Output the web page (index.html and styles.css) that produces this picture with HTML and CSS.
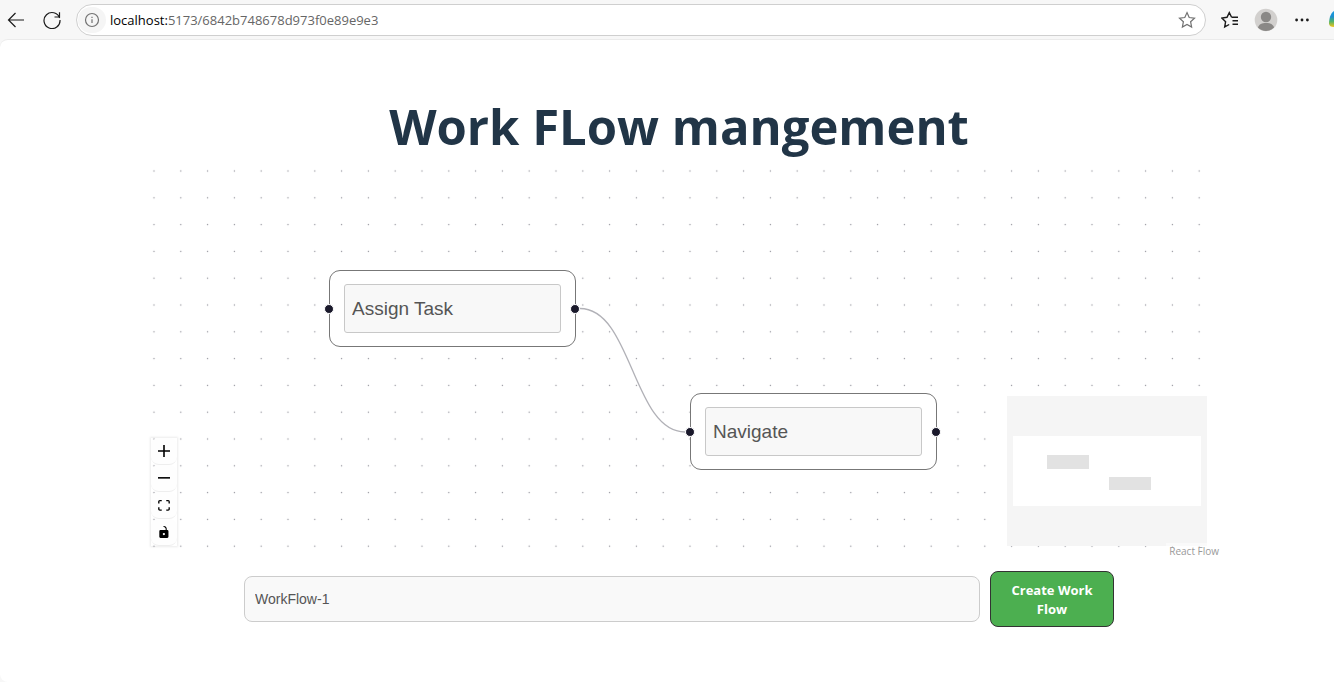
FILE: index.html
```html
<!DOCTYPE html>
<html lang="en">
<head>
<meta charset="utf-8">
<title>Work Flow</title>
<link rel="stylesheet" href="styles.css">
</head>
<body>
<header class="toolbar">
  <button class="tool" aria-label="Back">
    <svg width="18" height="18" viewBox="0 0 18 18"><path d="M17 9H1.5M8.5 2 1.5 9l7 7"/></svg>
  </button>
  <button class="tool" aria-label="Refresh">
    <svg width="18" height="18" viewBox="0 0 18 18"><path d="M16.6 7A8 8 0 1 0 17 9M16.5 1.2V6h-5"/></svg>
  </button>
  <div class="address">
    <button class="site-info" aria-label="Site information">
      <svg width="16" height="16" viewBox="0 0 16 16"><circle cx="8" cy="8" r="6.5"/><path d="M8 7.3v3.6M8 4.8v1.3"/></svg>
    </button>
    <p class="url"><span class="host">localhost:</span>5173/6842b748678d973f0e89e9e3</p>
    <button class="star" aria-label="Add to favorites">
      <svg width="18" height="18" viewBox="0 0 18 18"><path d="M9 1.6l2.2 4.9 5.3.6-3.9 3.6 1 5.3L9 13.4 4.4 16l1-5.3-3.9-3.6 5.3-.6z"/></svg>
    </button>
  </div>
  <button class="tool" aria-label="Favorites">
    <svg width="18" height="18" viewBox="0 0 18 18"><path d="M10.6 6.3 8.3 1.6 6 6.3l-5.1.8 3.7 3.6-.9 5.2 4.5-2.4M10.6 6.3H17M11.5 9.8H17M11.5 13.3H17" stroke-width="1.4"/></svg>
  </button>
  <button class="tool" aria-label="Profile">
    <svg class="avatar" width="24" height="24" viewBox="0 0 24 24"><circle cx="12" cy="12" r="11.3" fill="#d2d0ce"/><circle cx="12" cy="9" r="5.2" fill="#8a8886"/><path d="M3.9 19.5C5 16 8 14.9 12 14.9s7 1.1 8.1 4.6A11.3 11.3 0 0 1 3.9 19.5z" fill="#8a8886"/></svg>
  </button>
  <button class="tool" aria-label="Settings and more">
    <svg class="dots" width="16" height="16" viewBox="0 0 16 16"><circle cx="2.6" cy="8" r="1.4"/><circle cx="8" cy="8" r="1.4"/><circle cx="13.4" cy="8" r="1.4"/></svg>
  </button>
  <button class="assistant" aria-label="Assistant">
    <svg width="5" height="18" viewBox="0 0 5 18"><defs><linearGradient id="assist" x1="0" y1="0" x2="0" y2="1"><stop offset="0" stop-color="#1b9de2"/><stop offset=".35" stop-color="#1c8fd0"/><stop offset=".65" stop-color="#4fb36a"/><stop offset="1" stop-color="#f5c518"/></linearGradient></defs><path d="M5 0C1.5 2 0 8 0 12.5 0 15 2 16 5 16z" fill="url(#assist)"/></svg>
  </button>
</header>
<main class="page">
  <h1 class="title">Work FLow mangement</h1>
  <section class="flow" aria-label="Workflow canvas">
    <svg class="layer">
      <defs><pattern id="grid" x="4.6" y="-3.4" width="26.8" height="26.8" patternUnits="userSpaceOnUse"><circle cx="13.4" cy="13.4" r=".7" fill="#91919a"/></pattern></defs>
      <rect width="100%" height="100%" fill="url(#grid)"/>
      <path class="edge" d="M444 147.5C496 147.5 497 271 549 271"/>
    </svg>
    <div class="node node-assign">
      <input class="node-input" aria-label="Task name" value="Assign Task">
      <span class="handle handle-in"></span><span class="handle handle-out"></span>
    </div>
    <div class="node node-navigate">
      <input class="node-input" aria-label="Task name" value="Navigate">
      <span class="handle handle-in"></span><span class="handle handle-out"></span>
    </div>
    <div class="controls">
      <button class="control" aria-label="Zoom in"><svg width="12" height="12" viewBox="0 0 32 32"><path d="M32 18.133H18.133V32h-4.266V18.133H0v-4.266h13.867V0h4.266v13.867H32z"/></svg></button>
      <button class="control" aria-label="Zoom out"><svg width="12" height="2" viewBox="0 0 32 5"><path d="M0 0h32v4.2H0z"/></svg></button>
      <button class="control" aria-label="Fit view"><svg width="12" height="11" viewBox="0 0 32 30"><path d="M3.692 4.63c0-.53.4-.938.939-.938h5.215V0H4.708C2.13 0 0 2.054 0 4.63v5.216h3.692V4.631zM27.354 0h-5.2v3.692h5.17c.53 0 .984.4.984.939v5.215H32V4.631A4.624 4.624 0 0 0 27.354 0zm.954 24.83c0 .532-.4.94-.939.94h-5.215v3.768h5.215c2.577 0 4.631-2.13 4.631-4.707v-5.139h-3.692v5.139zm-23.677.94c-.531 0-.939-.4-.939-.94v-5.138H0v5.139c0 2.577 2.13 4.707 4.708 4.707h5.138V25.77H4.631z"/></svg></button>
      <button class="control" aria-label="Lock"><svg width="10" height="12" viewBox="0 0 25 32"><path d="M21.333 10.667H19.81V7.619C19.81 3.429 16.38 0 12.19 0c-4.114 1.828-1.37 2.133.305 2.438 1.676.305 4.42 2.59 4.42 5.181v3.048H3.047A3.056 3.056 0 0 0 0 13.714v15.238A3.056 3.056 0 0 0 3.048 32h18.285a3.056 3.056 0 0 0 3.048-3.048V13.714a3.056 3.056 0 0 0-3.048-3.047zM12.19 24.533a3.056 3.056 0 0 1-3.047-3.047 3.056 3.056 0 0 1 3.047-3.048 3.056 3.056 0 0 1 3.048 3.048 3.056 3.056 0 0 1-3.048 3.047z"/></svg></button>
    </div>
    <svg class="minimap" width="200" height="150" viewBox="0 0 200 150">
      <rect width="200" height="150" fill="#f5f5f5"/>
      <rect x="6" y="40" width="188" height="70" fill="#fff"/>
      <rect x="40" y="59" width="42" height="14" fill="#e2e2e2"/>
      <rect x="102" y="81" width="42" height="13" fill="#e2e2e2"/>
    </svg>
    <a class="credit" href="#">React Flow</a>
  </section>
  <form class="create">
    <input class="name" aria-label="Workflow name" value="WorkFlow-1">
    <button class="submit" type="button">Create Work Flow</button>
  </form>
</main>
</body>
</html>
```
FILE: styles.css
```css
* { box-sizing: border-box; }
body {
  margin: 0;
  min-height: 100vh;
  display: flex;
  flex-direction: column;
  background: #f7f7f7;
  font-family: "Open Sans", "Noto Sans", sans-serif;
}
button { padding: 0; border: 0; background: none; font: inherit; }
svg { display: block; }

.toolbar {
  display: flex;
  align-items: center;
  gap: 12px;
  height: 39px;
  padding-left: 4px;
}
.tool {
  display: grid;
  place-items: center;
  flex: none;
  width: 24px;
  height: 24px;
}
.tool svg, .star svg, .site-info svg {
  fill: none;
  stroke: #1b1b1b;
  stroke-width: 1.2;
}
.tool .avatar { stroke: none; }
.tool .dots { fill: #1b1b1b; stroke: none; }
.address {
  flex: 1;
  display: flex;
  align-items: center;
  height: 32px;
  padding: 0 9px 0 1px;
  border: 1px solid #cfcfcf;
  border-radius: 16px;
  background: #fff;
}
.site-info {
  display: grid;
  place-items: center;
  width: 28px;
  height: 26px;
  border-radius: 13px;
  background: #f5f5f5;
}
.site-info svg, .star svg { stroke: #717171; }
.url {
  flex: 1;
  margin: 0 0 0 4px;
  font-size: 13px;
  line-height: 18px;
  color: #666;
}
.host { color: #000; }
.assistant { margin-left: 3px; }

.page {
  flex: 1;
  padding: 54px 112px 0 136px;
  border-top: 1px solid #ebebeb;
  border-radius: 8px 0 0 8px;
  background: #fff;
}
.title {
  margin: 0 0 2px;
  font-size: 49px;
  line-height: 65px;
  text-align: center;
  color: #213547;
}
.flow {
  position: relative;
  height: 400px;
  overflow: hidden;
}
.layer { position: absolute; inset: 0; width: 100%; height: 100%; }
.edge { fill: none; stroke: #b1b1b7; stroke-width: 1.3; }

.node {
  position: absolute;
  width: 247px;
  padding: 13px 14px;
  border: 1px solid #777;
  border-radius: 11px;
  background: #fff;
}
.node-assign { left: 193px; top: 109px; }
.node-navigate { left: 554px; top: 232px; }
.node-input {
  display: block;
  width: 100%;
  height: 49px;
  padding: 0 7px;
  border: 1px solid #c8c8c8;
  border-radius: 3px;
  background: #f8f8f8;
  font: 19px "Liberation Sans", Arial, sans-serif;
  color: #555;
}
.handle {
  position: absolute;
  top: 50%;
  width: 10px;
  height: 10px;
  margin-top: -5px;
  border: 1px solid #fff;
  border-radius: 50%;
  background: #1a192b;
}
.handle-in { left: -6px; }
.handle-out { right: -5px; }

.controls {
  position: absolute;
  left: 15px;
  bottom: 15px;
  box-shadow: 0 0 2px 1px rgba(0, 0, 0, 0.08);
}
.control {
  display: grid;
  place-items: center;
  width: 26px;
  height: 27px;
  border-bottom: 1px solid #eee;
  border-radius: 8px;
  background: #fefefe;
}
.minimap { position: absolute; right: 15px; bottom: 15px; }
.credit {
  position: absolute;
  right: 0;
  bottom: 2px;
  padding: 2px 3px;
  background: rgba(255, 255, 255, 0.5);
  font-size: 10px;
  line-height: 12px;
  color: #999;
  text-decoration: none;
}

.create {
  display: flex;
  align-items: center;
  gap: 10px;
  max-width: 870px;
  margin: 10px auto 0;
}
.name {
  flex: 1;
  height: 46px;
  padding: 0 10px;
  border: 1px solid #ccc;
  border-radius: 8px;
  background: #f9f9f9;
  font: 14px "Liberation Sans", Arial, sans-serif;
  color: #555;
}
.submit {
  width: 124px;
  padding: 9px 16px 7px;
  border: 1px solid #333;
  border-radius: 8px;
  background: #4caf50;
  font-size: 13px;
  line-height: 19px;
  font-weight: 700;
  color: #fff;
}
```
